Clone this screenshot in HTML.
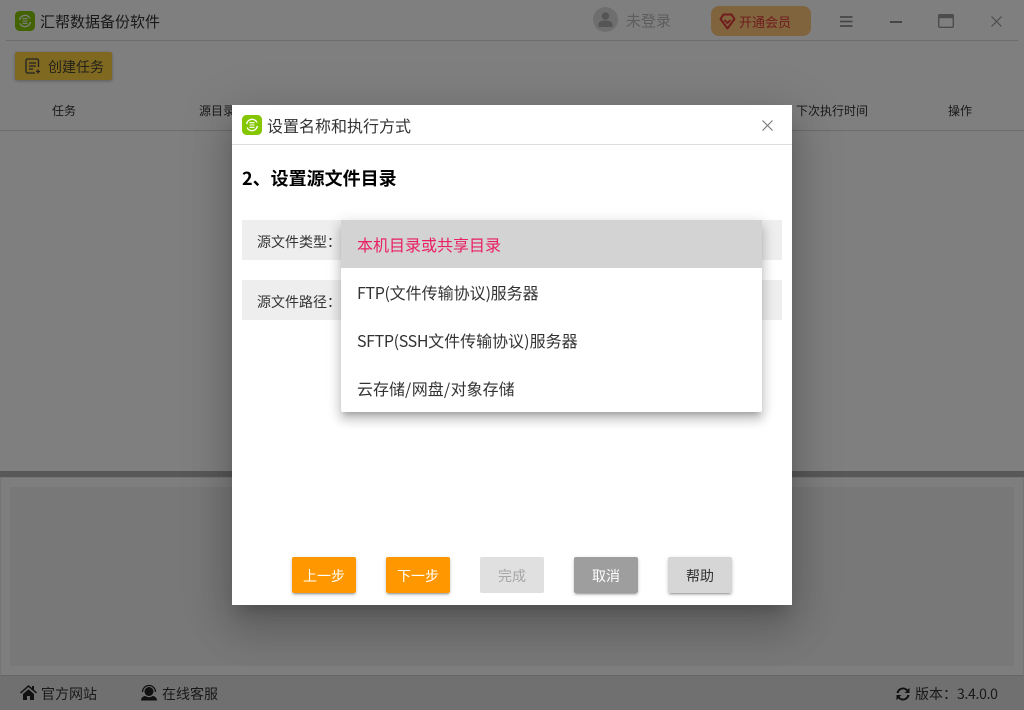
<!DOCTYPE html>
<html lang="zh-CN">
<head>
<meta charset="utf-8">
<title>汇帮数据备份软件</title>
<style>
*{box-sizing:border-box}
html,body{margin:0;padding:0}
body{width:1024px;height:710px;overflow:hidden;position:relative;background:#fff;font-family:"Noto Sans CJK SC","Liberation Sans",sans-serif;color:#333}
.a{position:absolute;white-space:nowrap;line-height:1}
.line{position:absolute;background:#d9d9d9;height:1px}
#overlay{position:absolute;left:0;top:0;width:1024px;height:710px;background:rgba(0,0,0,.5)}
#dialog{position:absolute;left:232px;top:105px;width:560px;height:500px;background:#fff;box-shadow:0 11px 15px -7px rgba(0,0,0,.2),0 24px 38px 3px rgba(0,0,0,.14),0 9px 46px 8px rgba(0,0,0,.12)}
.row{position:absolute;left:10px;width:540px;height:40px;background:#eee}
#menu{position:absolute;left:109px;top:115px;width:421px;height:192px;background:#fff;border-radius:2px;box-shadow:0 5px 5px -3px rgba(0,0,0,.2),0 8px 10px 1px rgba(0,0,0,.14),0 3px 14px 2px rgba(0,0,0,.12)}
.item{height:48px;line-height:48px;padding-left:16px;font-size:16px;color:#333;white-space:nowrap}
.n{letter-spacing:-.35px}
.s{letter-spacing:.5px}
.btn{position:absolute;top:452px;width:64px;height:36px;border-radius:2px;font-size:14px;line-height:38px;text-align:center;box-shadow:0 3px 1px -2px rgba(0,0,0,.2),0 2px 2px 0 rgba(0,0,0,.14),0 1px 5px 0 rgba(0,0,0,.12)}
</style>
</head>
<body>
<!-- underlying app -->
<svg class="a" style="left:15px;top:11px" width="20" height="20" viewBox="0 0 20 20"><rect width="20" height="20" rx="4.500" fill="#84c600"/><path d="M4.600 9A5.500 5.500 0 0 1 15 7.500M15.400 11A5.500 5.500 0 0 1 5 12.500" fill="none" stroke="#fff" stroke-width="1.400"/><path d="M7.500 7.700h5M7.500 10h5M7.500 12.300h5" stroke="#fff" stroke-width="1.100"/></svg>
<div class="a" style="left:40px;top:14px;font-size:15px">汇帮数据备份软件</div>
<div class="line" style="left:6px;top:40px;width:1012px"></div>
<div class="a" style="left:593px;top:7px;width:25px;height:25px;border-radius:50%;background:#ddd"></div>
<svg class="a" style="left:597px;top:11px" width="17" height="17" viewBox="0 0 17 17"><circle cx="8.500" cy="5" r="3.800" fill="#aaa"/><path d="M1.500 16v-2.500c0-2.500 2.500-4 7-4s7 1.500 7 4V16z" fill="#aaa"/></svg>
<div class="a" style="left:626px;top:13px;font-size:15px;color:#bbb">未登录</div>
<div class="a" style="left:711px;top:6px;width:100px;height:30px;border-radius:8px;background:#ffc87c"></div>
<svg class="a" style="left:719px;top:13px" width="17" height="17" viewBox="0 0 17 17"><path d="M4.500 1.500h8l3 4.500-7 9.500-7-9.500z" fill="none" stroke="#e03838" stroke-width="2" stroke-linejoin="round"/><path d="M5.500 7l3 3 3-3" fill="none" stroke="#e03838" stroke-width="1.800"/></svg>
<div class="a" style="left:739px;top:15px;font-size:13px;color:#e03838">开通会员</div>
<svg class="a" style="left:840px;top:16px" width="13" height="11" viewBox="0 0 13 11"><path d="M0 1h12.500M0 5.500h12.500M0 10h12.500" stroke="#8c8c8c" stroke-width="1.800"/></svg>
<div class="a" style="left:890px;top:21px;width:12px;height:2px;background:#8c8c8c"></div>
<svg class="a" style="left:938px;top:14px" width="16" height="14" viewBox="0 0 16 14"><rect x=".7" y=".7" width="14.600" height="12.600" rx="1" fill="none" stroke="#999" stroke-width="1.400"/><rect x=".7" y=".7" width="14.600" height="3.500" fill="#999"/></svg>
<svg class="a" style="left:991px;top:16px" width="11" height="11" viewBox="0 0 11 11"><path d="M.5.500l10 10M10.500.500l-10 10" stroke="#999" stroke-width="1.200"/></svg>

<div class="a" style="left:15px;top:52px;width:97px;height:28px;border-radius:2px;background:#ffd040;box-shadow:0 1px 3px rgba(0,0,0,.3)"></div>
<svg class="a" style="left:25px;top:58px" width="17" height="17" viewBox="0 0 17 17"><path d="M13.500 9V2.500a1.500 1.500 0 0 0-1.500-1.500H2.500A1.500 1.500 0 0 0 1 2.500v11A1.500 1.500 0 0 0 2.500 15H10M4 5h7M4 8h7M4 11h4M13 11.500v4M11 13.500h4" fill="none" stroke="#444" stroke-width="1.300"/></svg>
<div class="a" style="left:48px;top:60px;font-size:14px;color:#443">创建任务</div>

<div class="a" style="left:52px;top:105px;font-size:12px">任务</div>
<div class="a" style="left:199px;top:105px;font-size:12px">源目录</div>
<div class="a" style="left:796px;top:105px;font-size:12px">下次执行时间</div>
<div class="a" style="left:948px;top:105px;font-size:12px">操作</div>
<div class="line" style="left:0;top:130px;width:1024px"></div>

<div class="a" style="left:0;top:471px;width:1024px;height:6px;background:#b0b0b0"></div>
<div class="a" style="left:0;top:477px;width:1024px;height:199px;background:#fcfcfc;border:1px solid #e8e8e8;border-bottom:1px solid #ccc"></div>
<div class="a" style="left:10px;top:487px;width:1004px;height:179px;background:#f1f1f1"></div>
<div class="a" style="left:0;top:676px;width:1024px;height:34px;background:#e0e0e0"></div>
<svg class="a" style="left:20px;top:685px" width="17" height="15" viewBox="0 0 17 15"><path d="M8.500 0L0 7.500l1 1L8.500 2l7.500 6.500 1-1-3-2.700V1h-2v2zM3 9v6h4v-4h3v4h4V9L8.500 4.200z" fill="#222"/></svg>
<div class="a" style="left:41px;top:687px;font-size:14px">官方网站</div>
<svg class="a" style="left:140px;top:684px" width="18" height="17" viewBox="0 0 18 17"><path d="M2.500 8a6.500 6.500 0 0 1 13 0" fill="none" stroke="#222" stroke-width="1.300"/><circle cx="9" cy="7.500" r="4.500" fill="#222"/><path d="M1 16.500c0-3 2.500-4.500 4.500-4.500 1 .8 2.200 1.200 3.500 1.200s2.500-.4 3.500-1.200c2 0 4.500 1.500 4.500 4.500z" fill="#222"/></svg>
<div class="a" style="left:162px;top:687px;font-size:14px">在线客服</div>
<svg class="a" style="left:895px;top:686px" width="16" height="16" viewBox="0 0 16 16"><path d="M1.500 7a6.500 6.500 0 0 1 11-3.500L14.500 2v5h-5l2-1.800A4.300 4.300 0 0 0 3.800 7zM14.500 9a6.500 6.500 0 0 1-11 3.500L1.500 14V9h5l-2 1.800A4.300 4.300 0 0 0 12.200 9z" fill="#222"/></svg>
<div class="a" style="left:915px;top:687px;font-size:14px">版本：<span style="letter-spacing:-.3px">3.4.0.0</span></div>

<div id="overlay"></div>

<!-- dialog -->
<div id="dialog">
  <svg class="a" style="left:10px;top:10px" width="20" height="20" viewBox="0 0 20 20"><rect width="20" height="20" rx="4.500" fill="#84c600"/><path d="M4.600 9A5.500 5.500 0 0 1 15 7.500M15.400 11A5.500 5.500 0 0 1 5 12.500" fill="none" stroke="#fff" stroke-width="1.400"/><path d="M7.500 7.700h5M7.500 10h5M7.500 12.300h5" stroke="#fff" stroke-width="1.100"/></svg>
  <div class="a" style="left:35px;top:12px;font-size:16px;color:#333">设置名称和执行方式</div>
  <svg class="a" style="left:530px;top:15px" width="11" height="11" viewBox="0 0 11 11"><path d="M.5.500l10 10M10.500.500l-10 10" stroke="#777" stroke-width="1.100"/></svg>
  <div class="a" style="left:0;top:39px;width:560px;height:1px;background:#ddd"></div>
  <div class="a" style="left:10px;top:64px;font-size:18px;font-weight:bold;color:#000">2、设置源文件目录</div>

  <div class="row" style="top:115px"></div>
  <div class="row" style="top:175px"></div>
  <div class="a" style="left:25px;top:130px;font-size:14px;color:#333">源文件类型：</div>
  <div class="a" style="left:25px;top:190px;font-size:14px;color:#333">源文件路径：</div>

  <div id="menu">
    <div class="item" style="background:#d3d3d3;color:#e91e63">本机目录或共享目录</div>
    <div class="item"><span class="n">FTP(</span>文件传输协议<span class="n">)</span>服务器</div>
    <div class="item"><span class="n">SFTP(SSH</span>文件传输协议)服务器</div>
    <div class="item">云存储<span class="s">/</span>网盘<span class="s">/</span>对象存储</div>
  </div>

  <div class="btn" style="left:60px;background:#ff9800;color:#fff">上一步</div>
  <div class="btn" style="left:154px;background:#ff9800;color:#fff">下一步</div>
  <div class="btn" style="left:248px;background:#e0e0e0;color:#a6a6a6;box-shadow:none">完成</div>
  <div class="btn" style="left:342px;background:#9e9e9e;color:#fff">取消</div>
  <div class="btn" style="left:436px;background:#d6d6d6;color:#333">帮助</div>
</div>
</body>
</html>
